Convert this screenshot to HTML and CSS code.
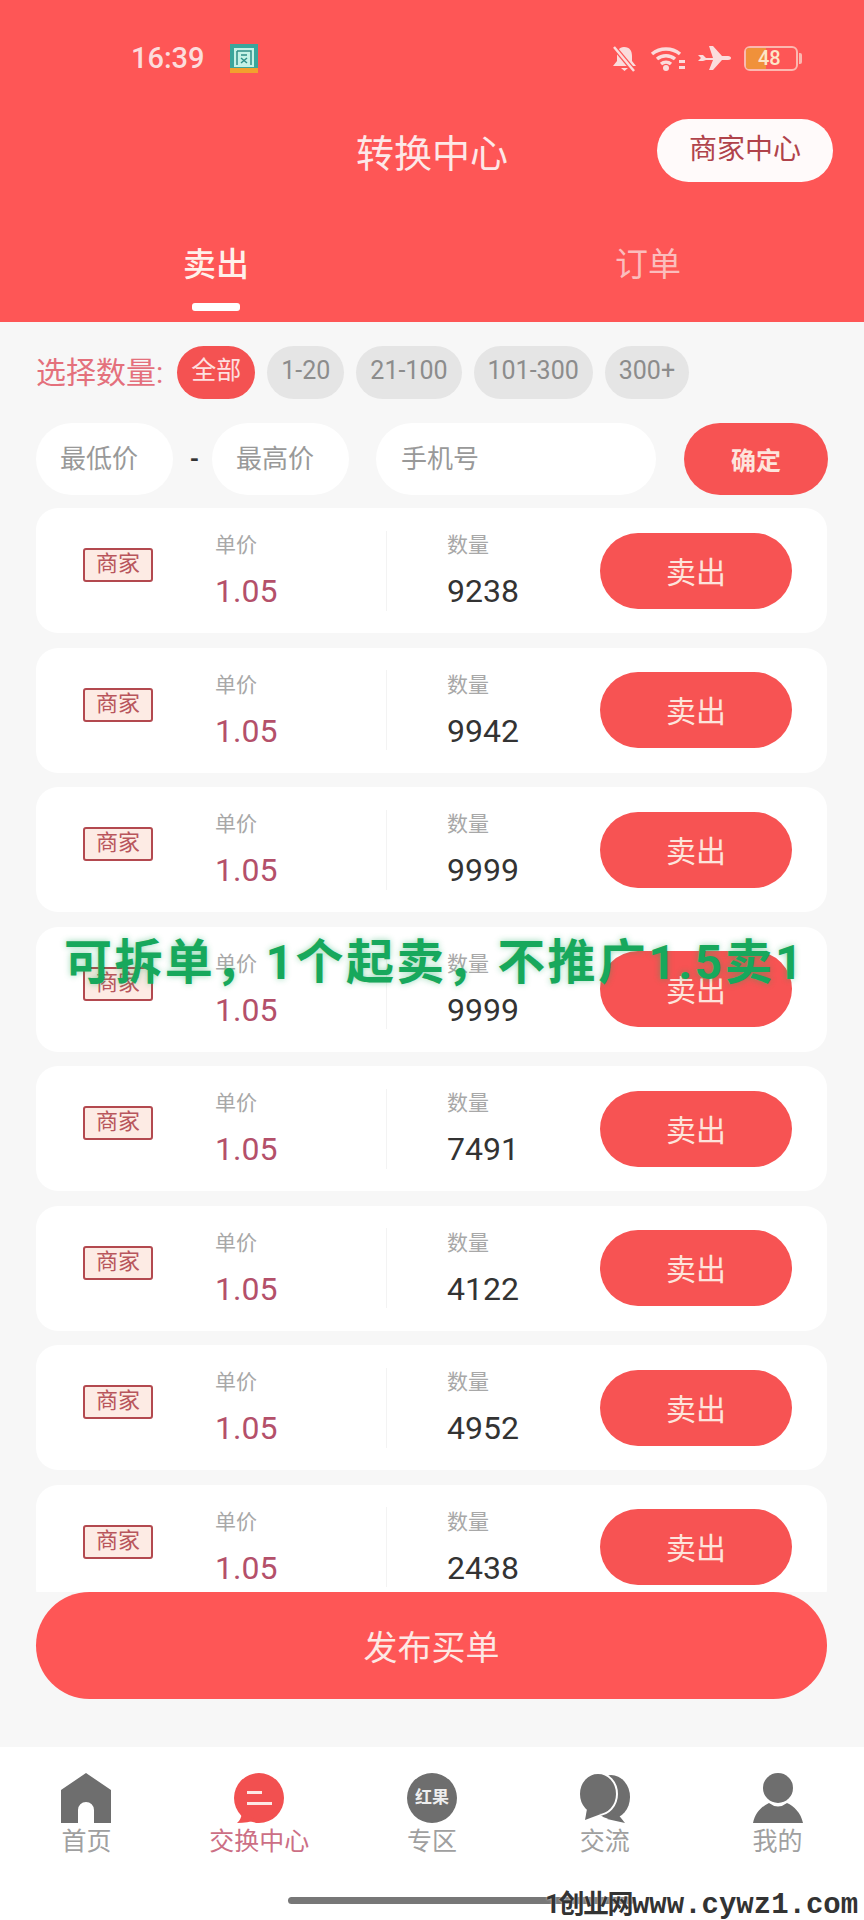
FILE: index.html
```html
<!DOCTYPE html>
<html lang="zh-CN">

<head>
    <meta charset="UTF-8">
    <meta name="viewport" content="width=device-width, initial-scale=1.0">
    <title>转换中心</title>
    <link rel="stylesheet" href="styles.css">
</head>

<body>
    <div class="app">
        <header class="top">
            <div class="status">
                <span class="time">16:39</span>
                <svg class="app-icon" width="28" height="29" viewBox="0 0 28 29">
                    <rect width="28" height="29" fill="#3aa69c" />
                    <rect x="4" y="4" width="20" height="19" fill="#c4f2e6" />
                    <path d="M7 7h14v14M7 7v14M11 11h6M11 14l6 5M17 14l-6 5" fill="none" stroke="#2f8f88" stroke-width="1.5" />
                    <rect y="24" width="28" height="5" fill="#f2a12e" />
                </svg>
                <div class="status-right">
                    <svg width="27" height="27" viewBox="0 0 27 27">
                        <path d="M13 2c-5 0-7 4-7 9v5l-4 5h23l-4-5v-5c0-5-2-9-8-9zM10 23h7l-3.500 3z" fill="#fbdcdc" />
                        <path d="M3 2l20 24" stroke="#fe5656" stroke-width="5" />
                        <path d="M3 2l20 24" stroke="#fbdcdc" stroke-width="2.500" />
                    </svg>
                    <svg width="36" height="26" viewBox="0 0 36 26">
                        <path d="M2 9a22 22 0 0 1 28 0M7 14a14 14 0 0 1 18 0M11 19a8 8 0 0 1 10 0" fill="none" stroke="#fbdcdc" stroke-width="3.500" />
                        <circle cx="16" cy="23" r="3" fill="#fbdcdc" />
                        <rect x="29" y="15" width="6" height="3" fill="#fbdcdc" />
                        <rect x="29" y="21" width="6" height="3" fill="#fbdcdc" />
                    </svg>
                    <svg width="34" height="24" viewBox="0 0 34 24">
                        <path d="M0 9l5 0 3 3h7L11 0h4l9 10h6c4 0 4 4 0 4h-6l-9 10h-4l4-10H8l-3 1H0l3-3z" fill="#fbdcdc" />
                    </svg>
                    <div class="battery">
                        <span class="battery-level"></span>
                        <span class="battery-num">48</span>
                    </div>
                </div>
            </div>
            <div class="titlebar">
                <span></span>
                <h1>转换中心</h1>
                <a class="shop-btn">商家中心</a>
            </div>
            <nav class="tabs">
                <div class="tab active">卖出<i></i></div>
                <div class="tab">订单</div>
            </nav>
        </header>

        <div class="filter">
            <span class="filter-label">选择数量:</span>
            <span class="chip active">全部</span>
            <span class="chip">1-20</span>
            <span class="chip">21-100</span>
            <span class="chip">101-300</span>
            <span class="chip">300+</span>
        </div>

        <form class="search">
            <input class="field price" type="text" placeholder="最低价">
            <span class="dash">-</span>
            <input class="field price" type="text" placeholder="最高价">
            <input class="field phone" type="text" placeholder="手机号">
            <button class="ok" type="button">确定</button>
        </form>

        <div class="list">
            <div class="card">
                <span class="badge">商家</span>
                <div class="col price-col"><span class="col-label">单价</span><span class="col-price">1.05</span></div>
                <span class="divider"></span>
                <div class="col qty-col"><span class="col-label">数量</span><span class="col-qty">9238</span></div>
                <button class="sell" type="button">卖出</button>
            </div>
            <div class="card">
                <span class="badge">商家</span>
                <div class="col price-col"><span class="col-label">单价</span><span class="col-price">1.05</span></div>
                <span class="divider"></span>
                <div class="col qty-col"><span class="col-label">数量</span><span class="col-qty">9942</span></div>
                <button class="sell" type="button">卖出</button>
            </div>
            <div class="card">
                <span class="badge">商家</span>
                <div class="col price-col"><span class="col-label">单价</span><span class="col-price">1.05</span></div>
                <span class="divider"></span>
                <div class="col qty-col"><span class="col-label">数量</span><span class="col-qty">9999</span></div>
                <button class="sell" type="button">卖出</button>
            </div>
            <div class="card">
                <span class="badge">商家</span>
                <div class="col price-col"><span class="col-label">单价</span><span class="col-price">1.05</span></div>
                <span class="divider"></span>
                <div class="col qty-col"><span class="col-label">数量</span><span class="col-qty">9999</span></div>
                <button class="sell" type="button">卖出</button>
            </div>
            <div class="card">
                <span class="badge">商家</span>
                <div class="col price-col"><span class="col-label">单价</span><span class="col-price">1.05</span></div>
                <span class="divider"></span>
                <div class="col qty-col"><span class="col-label">数量</span><span class="col-qty">7491</span></div>
                <button class="sell" type="button">卖出</button>
            </div>
            <div class="card">
                <span class="badge">商家</span>
                <div class="col price-col"><span class="col-label">单价</span><span class="col-price">1.05</span></div>
                <span class="divider"></span>
                <div class="col qty-col"><span class="col-label">数量</span><span class="col-qty">4122</span></div>
                <button class="sell" type="button">卖出</button>
            </div>
            <div class="card">
                <span class="badge">商家</span>
                <div class="col price-col"><span class="col-label">单价</span><span class="col-price">1.05</span></div>
                <span class="divider"></span>
                <div class="col qty-col"><span class="col-label">数量</span><span class="col-qty">4952</span></div>
                <button class="sell" type="button">卖出</button>
            </div>
            <div class="card">
                <span class="badge">商家</span>
                <div class="col price-col"><span class="col-label">单价</span><span class="col-price">1.05</span></div>
                <span class="divider"></span>
                <div class="col qty-col"><span class="col-label">数量</span><span class="col-qty">2438</span></div>
                <button class="sell" type="button">卖出</button>
            </div>
        </div>

        <div class="publish">
            <button class="publish-btn" type="button">发布买单</button>
        </div>

        <nav class="tabbar">
            <div class="tabbar-item">
                <svg width="50" height="50" viewBox="0 0 50 50">
                    <path d="M25 0L50 17V50H33V37a8 8 0 0 0-16 0V50H0V17z" fill="#6e6e6e" />
                </svg>
                <span>首页</span>
            </div>
            <div class="tabbar-item on">
                <svg width="50" height="50" viewBox="0 0 50 50">
                    <circle cx="25" cy="25" r="25" fill="#f25050" />
                    <path d="M8 40Q7 47 3 50Q14 50 22 47z" fill="#f25050" />
                    <rect x="13" y="18" width="15" height="3" fill="#fde8e4" />
                    <rect x="13" y="29" width="25" height="3" fill="#fde8e4" />
                </svg>
                <span>交换中心</span>
            </div>
            <div class="tabbar-item">
                <div class="round-icon">红果</div>
                <span>专区</span>
            </div>
            <div class="tabbar-item">
                <svg width="52" height="50" viewBox="0 0 52 50">
                    <ellipse cx="32" cy="24" rx="19" ry="22" fill="#6e6e6e" />
                    <path d="M38 40L46 50L28 46z" fill="#6e6e6e" />
                    <ellipse cx="19" cy="21" rx="19" ry="21" fill="#6e6e6e" stroke="#fff" stroke-width="2" />
                    <path d="M8 36L6 47L22 41z" fill="#6e6e6e" />
                </svg>
                <span>交流</span>
            </div>
            <div class="tabbar-item">
                <svg width="50" height="50" viewBox="0 0 50 50">
                    <circle cx="25" cy="15" r="15" fill="#6e6e6e" />
                    <path d="M0 50C2 40 9 33 16 30Q25 37 34 30C41 33 48 40 50 50z" fill="#6e6e6e" />
                </svg>
                <span>我的</span>
            </div>
        </nav>

        <!-- stuff stamped over the screenshot -->
        <div class="stamp">可拆单，1个起卖，不推广1.5卖1</div>
        <div class="home-bar"></div>
        <div class="site-mark">1创业网<b>www.cywz1.com</b></div>
    </div>
</body>

</html>
```

FILE: styles.css
```css
* {
    box-sizing: border-box;
}

html,
body {
    margin: 0;
    padding: 0;
}

body {
    font-family: Roboto, "Noto Sans CJK SC", sans-serif;
}

button,
input {
    font-family: inherit;
    border: 0;
    margin: 0;
}

.app {
    position: relative;
    width: 864px;
    height: 1920px;
    overflow: hidden;
    display: flex;
    flex-direction: column;
    background: #f7f7f7;
}

.top {
    flex: none;
    height: 322px;
    background: #fe5656;
    color: #fff;
}

.status {
    height: 116px;
    padding: 0 66px 0 131px;
    display: flex;
    align-items: center;
}

.time {
    font-size: 29px;
    font-weight: 500;
    color: #fcdcdc;
}

.app-icon {
    margin-left: 25px;
}

.status-right {
    margin-left: auto;
    display: flex;
    align-items: center;
    gap: 12px;
}

.battery {
    position: relative;
    width: 54px;
    height: 25px;
    border: 2px solid #fbb8b0;
    border-radius: 6px;
}

.battery::after {
    content: "";
    position: absolute;
    right: -6px;
    top: 5px;
    width: 3px;
    height: 11px;
    border-radius: 0 2px 2px 0;
    background: #fbb8b0;
}

.battery-level {
    display: block;
    width: 20px;
    height: 100%;
    background: #f0913a;
    border-radius: 3px 0 0 3px;
}

.battery-num {
    position: absolute;
    left: 12px;
    top: -1px;
    font-size: 20px;
    line-height: 23px;
    font-weight: 500;
    color: #fde6c8;
}

.titlebar {
    height: 68px;
    padding: 0 31px;
    display: grid;
    grid-template-columns: 1fr auto 1fr;
    align-items: center;
}

h1 {
    margin: 0;
    font-size: 38px;
    font-weight: 400;
    color: #fde8e8;
}

.shop-btn {
    justify-self: end;
    width: 176px;
    height: 63px;
    line-height: 61px;
    text-align: center;
    border-radius: 32px;
    background: #fffafa;
    color: #b0434b;
    font-size: 28px;
}

.tabs {
    height: 138px;
    display: grid;
    grid-template-columns: 1fr 1fr;
    text-align: center;
}

.tab {
    padding-top: 59px;
    font-size: 33px;
    line-height: 44px;
    color: #fbbdbd;
}

.tab.active {
    color: #fff0ea;
    font-weight: 500;
}

.tab i {
    display: block;
    width: 48px;
    height: 8px;
    margin: 16px auto 0;
    border-radius: 3px;
    background: #fff;
}

.filter {
    flex: none;
    margin-top: 24px;
    padding-left: 36px;
    display: flex;
    align-items: center;
    gap: 12px;
}

.filter-label {
    font-size: 30px;
    line-height: 53px;
    color: #e4707c;
    margin-right: 2px;
}

.chip {
    height: 53px;
    line-height: 50px;
    padding: 0 14px;
    border-radius: 27px;
    background: #e5e5e5;
    color: #8c8c8c;
    font-size: 25px;
}

.chip.active {
    background: #f45252;
    color: #fde0e0;
}

.search {
    flex: none;
    margin-top: 24px;
    padding-left: 36px;
    display: flex;
    align-items: center;
}

.field {
    height: 72px;
    border-radius: 36px;
    background: #fff;
    font-size: 26px;
    outline: none;
}

.field::placeholder {
    color: #999;
}

.field.price {
    width: 137px;
    padding: 0 0 0 24px;
}

.dash {
    width: 39px;
    padding-left: 4px;
    text-align: center;
    font-size: 24px;
    font-weight: 700;
    color: #333;
}

.field.phone {
    width: 280px;
    margin-left: 27px;
    padding: 0 0 0 25px;
}

.ok {
    width: 144px;
    height: 72px;
    margin-left: 28px;
    border-radius: 36px;
    background: #f75353;
    color: #fde4dc;
    font-size: 25px;
    font-weight: 700;
}

.list {
    flex: 1;
    min-height: 0;
    overflow: hidden;
    margin-top: 13px;
    padding: 0 37px 0 36px;
    display: flex;
    flex-direction: column;
    gap: 14.500px;
}

.card {
    flex: none;
    height: 125px;
    padding-left: 47px;
    display: flex;
    align-items: center;
    border-radius: 22px;
    background: #fff;
}

.badge {
    flex: none;
    width: 70px;
    height: 34px;
    margin-bottom: 11px;
    line-height: 28px;
    text-align: center;
    border: 2px solid #b3494f;
    border-radius: 3px;
    background: #fdebe4;
    color: #b8565c;
    font-size: 22px;
}

.col {
    display: flex;
    flex-direction: column;
}

.price-col {
    width: 171px;
    margin-left: 62px;
}

.qty-col {
    width: 153px;
    margin-left: 60px;
}

.col-label {
    font-size: 21px;
    line-height: 30px;
    color: #a8a8a8;
}

.col-price,
.col-qty {
    margin-top: 11px;
    font-size: 32px;
    line-height: 40px;
}

.col-price {
    color: #b4506a;
}

.col-qty {
    color: #333;
}

.divider {
    flex: none;
    width: 1px;
    height: 80px;
    background: #f3f3f3;
}

.sell {
    flex: none;
    width: 192px;
    height: 76px;
    padding-bottom: 3px;
    border-radius: 38px;
    background: #f75353;
    color: #fde4dc;
    font-size: 30px;
}

.publish {
    flex: none;
    height: 155px;
    padding: 0 37px 0 36px;
}

.publish-btn {
    display: block;
    width: 100%;
    height: 107px;
    border-radius: 54px;
    background: #fe5656;
    color: #fde8e4;
    font-size: 34px;
}

.tabbar {
    flex: none;
    height: 173px;
    padding-top: 26px;
    display: grid;
    grid-template-columns: repeat(5, 1fr);
    background: #fff;
}

.tabbar-item {
    display: flex;
    flex-direction: column;
    align-items: center;
    font-size: 25px;
    line-height: 30px;
    color: #a0a0a0;
}

.tabbar-item svg {
    display: block;
}

.tabbar-item span {
    margin-top: 4px;
}

.tabbar-item.on span {
    color: #cc6f85;
}

.round-icon {
    width: 50px;
    height: 50px;
    border-radius: 50%;
    background: #6e6e6e;
    color: #eee;
    font-size: 17px;
    font-weight: 700;
    line-height: 48px;
    text-align: center;
}

.stamp {
    position: absolute;
    left: 64px;
    top: 932px;
    font-size: 48px;
    line-height: 62px;
    font-weight: 700;
    letter-spacing: 2.400px;
    white-space: nowrap;
    color: #17a85c;
    text-shadow: 0 0 6px rgba(23, 168, 92, 0.45);
}

.home-bar {
    position: absolute;
    left: 288px;
    top: 1897px;
    width: 346px;
    height: 7px;
    border-radius: 4px;
    background: #777;
}

.site-mark {
    position: absolute;
    left: 545px;
    top: 1889px;
    white-space: nowrap;
    font-size: 26px;
    line-height: 30px;
    font-weight: 700;
    letter-spacing: -1.500px;
    color: #333;
    text-shadow: 0 0 2px #fff;
}

.site-mark b {
    font-family: "Liberation Mono", monospace;
    font-size: 29px;
    font-weight: 700;
    letter-spacing: 0;
}
```
